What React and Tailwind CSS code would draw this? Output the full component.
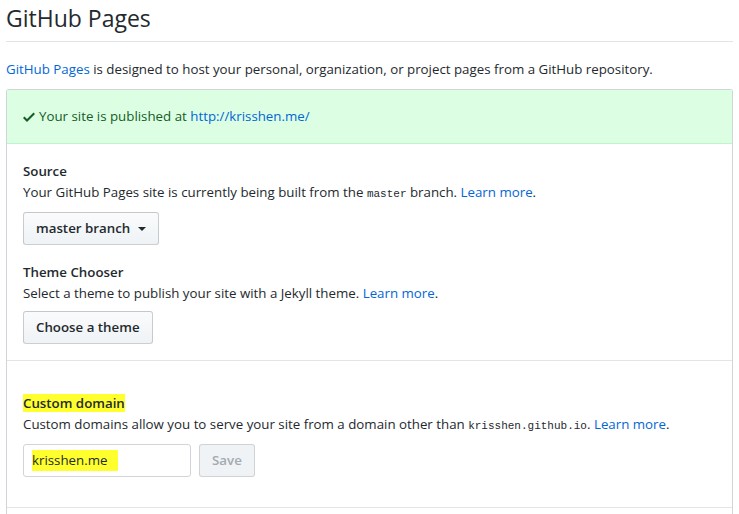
import React from "react";

function Check() {
  return (
    <svg width="12" height="16" viewBox="0 0 12 16" className="inline-block mr-[4px] fill-[#165c26]">
      <path fillRule="evenodd" d="M12 5l-8 8-4-4 1.5-1.5L4 10l6.5-6.5L12 5z" />
    </svg>
  );
}

function Caret() {
  return (
    <span className="inline-block ml-[8px] align-middle w-0 h-0 border-l-[4px] border-r-[4px] border-t-[4px] border-l-transparent border-r-transparent border-t-[#24292e] relative top-[0px]" />
  );
}

const btn =
  "inline-flex items-center h-[33px] px-[12px] rounded-[3px] border border-[rgba(27,31,35,0.2)] bg-gradient-to-b from-[#fafbfc] to-[#eff3f6] text-[13.3px] font-semibold text-[#24292e]";

const mono = { fontFamily: '"Liberation Mono", monospace' };

export default function App() {
  return (
    <div
      className="w-[739px] h-[514px] overflow-hidden bg-white px-[6px] text-[13.3px] leading-[21px] text-[#24292e]"
      style={{ fontFamily: '"Segoe UI", "Open Sans", sans-serif' }}
    >
      <h2 className="text-[23px] leading-[30px] font-normal pt-[3px] pb-[8px] border-b border-[#e1e4e8]">
        GitHub Pages
      </h2>
      <p className="mt-[17px] mb-[9px]">
        <a className="text-[#0366d6]">GitHub Pages</a> is designed to host your personal, organization, or project pages from a GitHub repository.
      </p>
      <div className="border border-[#d1d5da] border-b-0 rounded-t-[3px] h-[500px]">
        <div className="h-[54px] flex items-center px-[16px] bg-[#dcffe4] border-b border-[#bef5cb] text-[#165c26]">
          <Check />
          <span>
            Your site is published at <a className="text-[#0366d6]">http://krisshen.me/</a>
          </span>
        </div>
        <div className="px-[16px] pt-[17px] pb-[16px] border-b border-[#e1e4e8]">
          <div className="font-semibold">Source</div>
          <div>
            Your GitHub Pages site is currently being built from the{" "}
            <code className="text-[11px]" style={mono}>master</code> branch.{" "}
            <a className="text-[#0366d6]">Learn more</a>.
          </div>
          <div className="mt-[7px]">
            <button className={btn}>
              master branch <Caret />
            </button>
          </div>
          <div className="font-semibold mt-[17px]">Theme Chooser</div>
          <div>
            Select a theme to publish your site with a Jekyll theme. <a className="text-[#0366d6]">Learn more</a>.
          </div>
          <div className="mt-[7px]">
            <button className={btn}>Choose a theme</button>
          </div>
        </div>
        <div className="px-[16px] pt-[32px] pb-[30px] border-b border-[#e1e4e8]">
          <div className="font-semibold">
            <span className="bg-[#ffff2e]">Custom domain</span>
          </div>
          <div>
            Custom domains allow you to serve your site from a domain other than{" "}
            <code className="text-[11px]" style={mono}>krisshen.github.io</code>.{" "}
            <a className="text-[#0366d6]">Learn more</a>.
          </div>
          <div className="mt-[7px] flex items-center gap-[8px]">
            <div className="w-[168px] h-[33px] border border-[#d1d5da] rounded-[3px] flex items-center px-[8px]">
              <span className="bg-[#ffff2e] pr-[10px]">krisshen.me</span>
            </div>
            <button className="inline-flex items-center h-[33px] px-[12px] rounded-[3px] border border-[rgba(27,31,35,0.15)] bg-[#eff3f6] text-[13.3px] font-semibold text-[#a3aab1]">
              Save
            </button>
          </div>
        </div>
      </div>
    </div>
  );
}
